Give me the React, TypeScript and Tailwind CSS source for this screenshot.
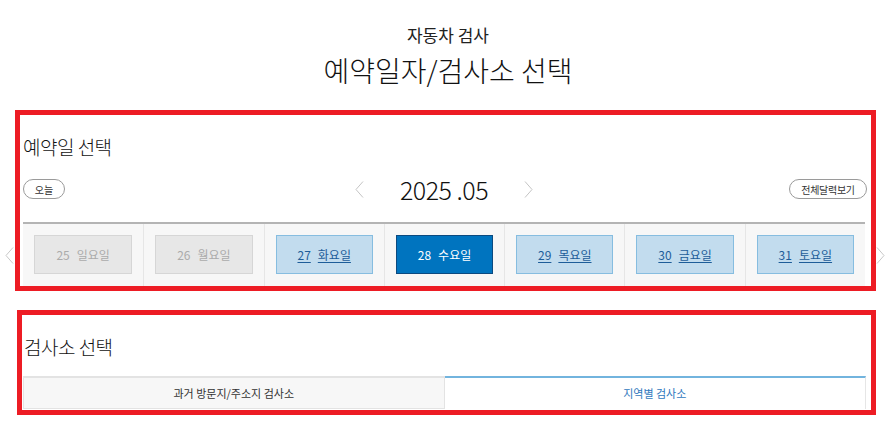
const days = [
  { d: 25, w: '일요일', state: 'off' },
  { d: 26, w: '월요일', state: 'off' },
  { d: 27, w: '화요일', state: 'on' },
  { d: 28, w: '수요일', state: 'active' },
  { d: 29, w: '목요일', state: 'on' },
  { d: 30, w: '금요일', state: 'on' },
  { d: 31, w: '토요일', state: 'on' },
];

function Chevron({ dir, className }: { dir: 'left' | 'right'; className?: string }) {
  return (
    <svg width="9" height="17" viewBox="0 0 9 17" fill="none" className={className}>
      <polyline
        points={dir === 'left' ? '8,0.5 1,8.5 8,16.5' : '1,0.5 8,8.5 1,16.5'}
        stroke="currentColor"
        strokeWidth="1"
      />
    </svg>
  );
}

function DayButton({ d, w, state }: { d: number; w: string; state: string }) {
  if (state === 'active') {
    return (
      <div className="flex h-[39px] items-center justify-center gap-[7px] border border-[#0b4a80] bg-[#0074bf] text-[12px] text-white">
        <span>{d}</span>
        <span>{w}</span>
      </div>
    );
  }
  if (state === 'on') {
    return (
      <div className="flex h-[39px] items-center justify-center gap-[7px] border border-[#86bde0] bg-[#c2dcee] text-[12px] text-[#1d5d99] underline underline-offset-2">
        <span>{d}</span>
        <span>{w}</span>
      </div>
    );
  }
  return (
    <div className="flex h-[39px] items-center justify-center gap-[7px] border border-[#d6d6d6] bg-[#e7e7e7] text-[12px] text-[#ababab]">
      <span>{d}</span>
      <span>{w}</span>
    </div>
  );
}

export default function App() {
  return (
    <div className="min-h-[427px] w-[896px] bg-white font-['Noto_Sans_CJK_KR','Noto_Sans',sans-serif] text-[#111]">
      <div className="pt-[23px] text-center">
        <p className="text-[17px] leading-[24px] text-[#222]">자동차 검사</p>
        <h1 className="mt-[5px] text-[28px] font-light leading-[36px]">예약일자/검사소 선택</h1>
      </div>

      <div className="relative ml-[15px] mt-[22px] w-[861px]">
        <section className="h-[181px] overflow-hidden border-[5px] border-[#ed1c24] pl-[3px] pr-[6px] pt-[20px]">
          <h2 className="text-[19px] font-light leading-[24px] tracking-[-0.5px]">예약일 선택</h2>
          <div className="mt-[20px] flex h-[20px] items-center">
            <div className="flex-1">
              <button className="flex h-[20px] w-[42px] items-center justify-center rounded-full border border-[#9a9a9a] text-[10px] text-[#333]">
                오늘
              </button>
            </div>
            <div className="flex items-center gap-[36px]">
              <Chevron dir="left" className="text-[#c4c4c4]" />
              <span className="text-[25px] font-light leading-[30px] tracking-[-0.5px] text-[#111]">2025 .05</span>
              <Chevron dir="right" className="text-[#c4c4c4]" />
            </div>
            <div className="flex flex-1 justify-end">
              <button className="mr-[-2px] flex h-[20px] w-[78px] items-center justify-center rounded-full border border-[#9a9a9a] text-[10px] tracking-[-0.3px] text-[#333]">
                전체달력보기
              </button>
            </div>
          </div>
          <div className="mt-[23px] grid grid-cols-7 border-t-2 border-[#b4b4b4] bg-[#f7f7f7]">
            {days.map((day, i) => (
              <div
                key={day.d}
                className={`h-[64px] px-[11px] pt-[11px] ${i > 0 ? 'border-l border-[#e6e6e6]' : ''}`}
              >
                <DayButton {...day} />
              </div>
            ))}
          </div>
        </section>
        <Chevron dir="left" className="absolute left-[-10px] top-[137px] text-[#c8c8c8]" />
        <Chevron dir="right" className="absolute right-[-9px] top-[137px] text-[#c8c8c8]" />
      </div>

      <section className="ml-[17px] mt-[19px] h-[105px] w-[859px] overflow-hidden border-[5px] border-[#ed1c24] pl-[1px] pr-[5px] pt-[20px]">
        <h2 className="pl-[1px] text-[19px] font-light leading-[24px] tracking-[-0.5px]">검사소 선택</h2>
        <div className="mt-[17px] grid grid-cols-2">
          <div className="flex h-[33px] items-center justify-center border border-t-2 border-[#e3e3e3] bg-[#f7f7f7] text-[11px] text-[#333]">
            과거 방문지/주소지 검사소
          </div>
          <div className="flex h-[33px] items-center justify-center border-r border-t-2 border-r-[#e6e6e6] border-t-[#72b4de] bg-white text-[11px] text-[#2f78bd]">
            지역별 검사소
          </div>
        </div>
      </section>
    </div>
  );
}
